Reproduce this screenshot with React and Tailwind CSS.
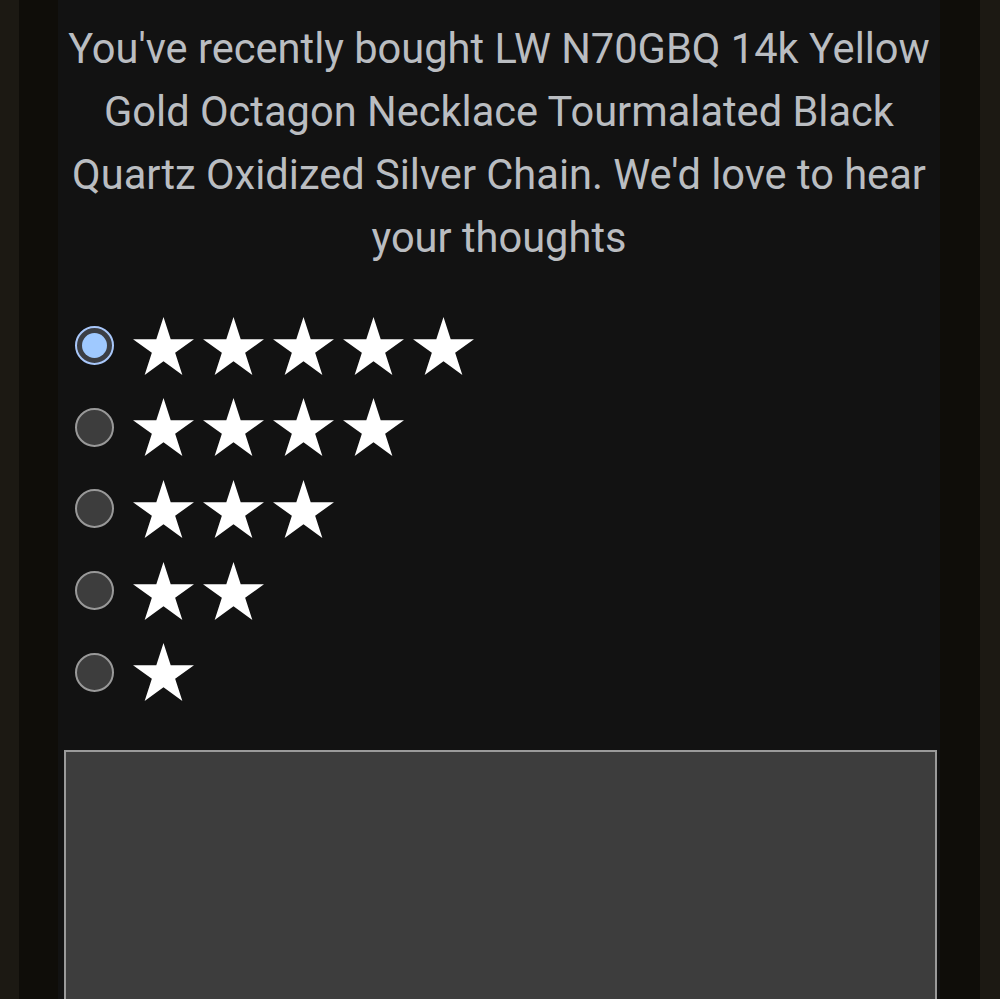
import React from "react";

function Star() {
  return (
    <svg width="61" height="60" viewBox="0 0 100 95.1" className="block shrink-0">
      <polygon
        fill="#ffffff"
        points="50,0 61.8,36.3 100,36.3 69.1,58.8 80.9,95.1 50,72.7 19.1,95.1 30.9,58.8 0,36.3 38.2,36.3"
      />
    </svg>
  );
}

function Radio({ checked }) {
  if (checked) {
    return (
      <div className="w-[39px] h-[39px] rounded-full border-2 border-[#a8c7fa] bg-[#3b3e44] flex items-center justify-center shrink-0">
        <div className="w-[25px] h-[25px] rounded-full bg-[#9fc9ff]" />
      </div>
    );
  }
  return (
    <div className="w-[39px] h-[39px] rounded-full border-2 border-[#999999] bg-[#3d3d3d] shrink-0" />
  );
}

export default function App() {
  const ratings = [5, 4, 3, 2, 1];
  return (
    <div className="flex h-[999px] w-full overflow-hidden bg-[#121212]" style={{ fontFamily: "Roboto, 'Noto Sans', sans-serif" }}>
      <div className="w-[19px] shrink-0 bg-[#1c1913]" />
      <div className="w-[39px] shrink-0 bg-[#0f0d09]" />
      <main className="flex-1 bg-[#121212] flex flex-col">
        <p className="pt-[17px] px-[4px] text-center text-[41.6px] leading-[63px] text-[#babdc1]">
          You've recently bought LW N70GBQ 14k Yellow Gold Octagon Necklace Tourmalated Black Quartz Oxidized Silver Chain. We'd love to hear your thoughts
        </p>
        <div className="mt-[36px] pl-[17px] flex flex-col">
          {ratings.map((n, i) => (
            <label key={n} className="h-[81.6px] flex items-center gap-[19px]">
              <Radio checked={i === 0} />
              <div className="flex gap-[9px]">
                {Array.from({ length: n }).map((_, k) => (
                  <Star key={k} />
                ))}
              </div>
            </label>
          ))}
        </div>
        <div className="mt-[37px] ml-[6px] mr-[3px] h-[400px] shrink-0 border-2 border-[#9a9a9a] bg-[#3d3d3d]" />
      </main>
      <div className="w-[40px] shrink-0 bg-[#0f0d09]" />
      <div className="w-[20px] shrink-0 bg-[#1c1913]" />
    </div>
  );
}
